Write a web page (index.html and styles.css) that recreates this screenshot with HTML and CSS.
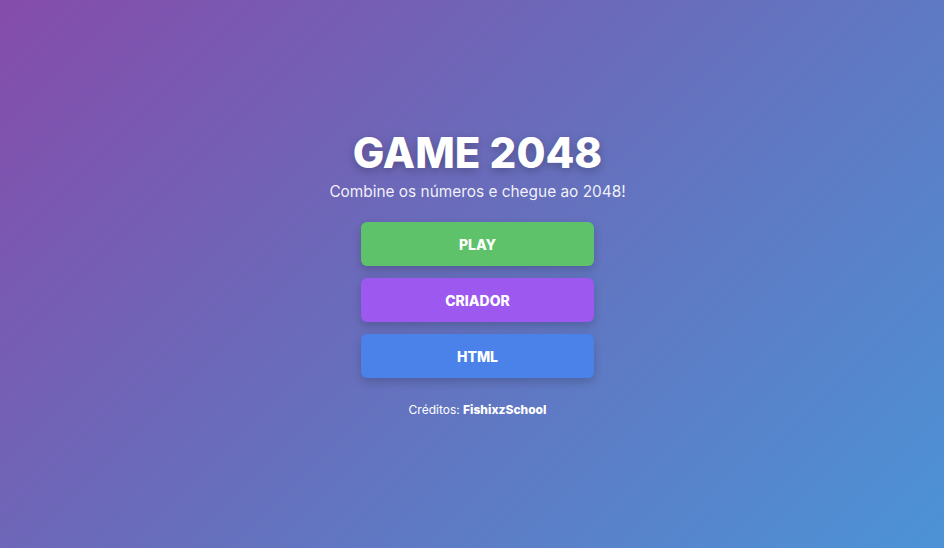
FILE: index.html
```html
<!DOCTYPE html>
<html lang="pt">
<head>
<meta charset="utf-8">
<title>Game 2048</title>
<link rel="stylesheet" href="styles.css">
</head>
<body>
<main class="menu">
  <h1 class="title">GAME 2048</h1>
  <p class="subtitle">Combine os números e chegue ao 2048!</p>
  <div class="buttons">
    <button class="btn btn-play">PLAY</button>
    <button class="btn btn-criador">CRIADOR</button>
    <button class="btn btn-html">HTML</button>
  </div>
  <p class="credits">Créditos: <strong>FishixzSchool</strong></p>
</main>
</body>
</html>
```
FILE: styles.css
```css
* { box-sizing: border-box; }
html, body { height: 100%; }
body {
  margin: 0;
  padding-left: 11px;
  font-family: "Inter", "Open Sans", sans-serif;
  background: linear-gradient(135deg, #854cab 0%, #6670bd 50%, #4c93d6 100%);
  color: #fff;
  display: flex;
  align-items: center;
  justify-content: center;
}
.menu {
  display: flex;
  flex-direction: column;
  align-items: center;
}
.title {
  margin: 0;
  font-size: 42px;
  font-weight: 800;
  line-height: 46px;
  text-shadow: 0 3px 8px rgba(0,0,0,0.25);
}
.subtitle {
  margin: 6px 0 0;
  font-size: 15.4px;
  line-height: 20px;
  color: rgba(255,255,255,0.92);
}
.buttons {
  margin-top: 20px;
  display: flex;
  flex-direction: column;
  gap: 12px;
}
.btn {
  width: 233px;
  height: 44px;
  border: none;
  border-radius: 6px;
  color: #fff;
  font-family: inherit;
  font-size: 14px;
  font-weight: 800;
  box-shadow: 0 4px 10px rgba(0,0,0,0.18);
}
.btn-play { background: #5dc26a; }
.btn-criador { background: #9c58ef; }
.btn-html { background: #4a82ea; }
.credits {
  margin: 24px 0 0;
  font-size: 12px;
  line-height: 16px;
}
.credits strong { font-weight: 800; }
```
